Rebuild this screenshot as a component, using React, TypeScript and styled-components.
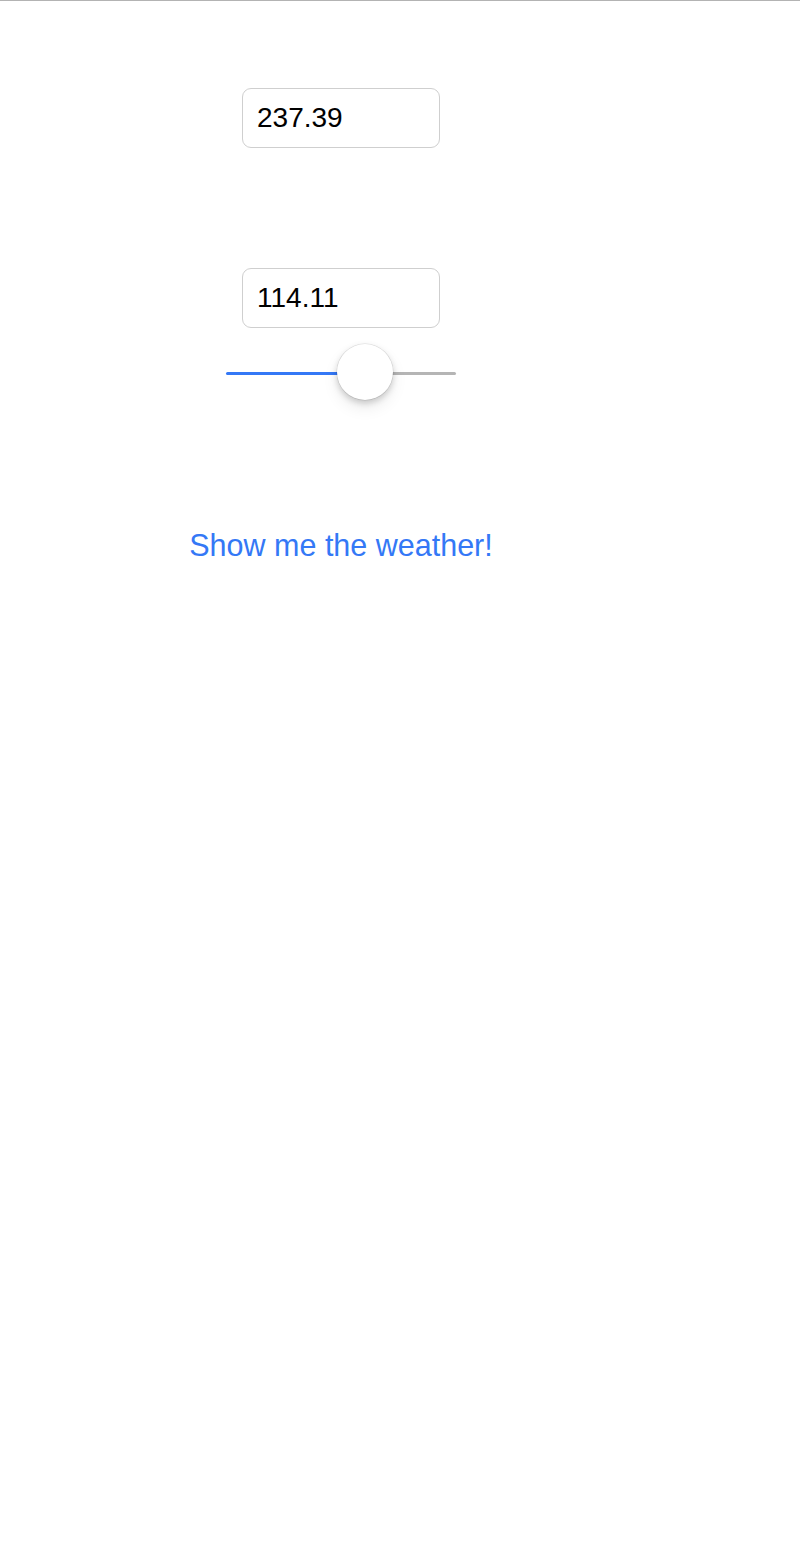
import React from "react";
import styled, { createGlobalStyle } from "styled-components";

const Global = createGlobalStyle`
  html, body { margin: 0; padding: 0; background: #ffffff; }
  body { font-family: "Liberation Sans", Arial, sans-serif; }
`;

const Page = styled.div`
  width: 800px;
  min-height: 1566px;
  border-top: 1px solid #b3b3b3;
  box-sizing: border-box;
`;

const Column = styled.div`
  width: 682px;
  display: flex;
  flex-direction: column;
  align-items: center;
  padding-top: 87px;
`;

const Field = styled.input<{ $gap: number }>`
  width: 198px;
  height: 60px;
  box-sizing: border-box;
  border: 1px solid #cfcfcf;
  border-radius: 9px;
  padding: 0 14px;
  font-family: "Liberation Sans", Arial, sans-serif;
  font-size: 28px;
  color: #000;
  background: #fff;
  outline: none;
  margin-top: ${(p) => p.$gap}px;
`;

const SliderWrap = styled.div`
  width: 230px;
  height: 56px;
  margin-top: 16px;
  position: relative;
  display: flex;
  align-items: center;
`;

const Track = styled.div<{ $color: string }>`
  height: 3px;
  margin-top: 2px;
  border-radius: 2px;
  background: ${(p) => p.$color};
`;

const Thumb = styled.div`
  position: absolute;
  top: 0;
  width: 56px;
  height: 56px;
  border-radius: 50%;
  background: #fff;
  box-shadow: 0 0 0 0.5px rgba(0, 0, 0, 0.12), 0 3px 6px rgba(0, 0, 0, 0.18),
    0 8px 16px rgba(0, 0, 0, 0.08);
`;

const LinkButton = styled.button`
  margin-top: 128px;
  border: none;
  background: none;
  padding: 0;
  font-family: "Liberation Sans", Arial, sans-serif;
  font-size: 30.5px;
  color: #3478f6;
  cursor: pointer;
`;

export default function App() {
  const width = 230;
  const thumb = 56;
  const left = 111;
  return (
    <Page>
      <Global />
      <Column>
        <Field $gap={0} defaultValue="237.39" />
        <Field $gap={120} defaultValue="114.11" />
        <SliderWrap>
          <Track $color="#3478f6" style={{ width: left + thumb / 2 }} />
          <Track $color="#b5b5b5" style={{ width: width - left - thumb / 2 }} />
          <Thumb style={{ left }} />
        </SliderWrap>
        <LinkButton>Show me the weather!</LinkButton>
      </Column>
    </Page>
  );
}
